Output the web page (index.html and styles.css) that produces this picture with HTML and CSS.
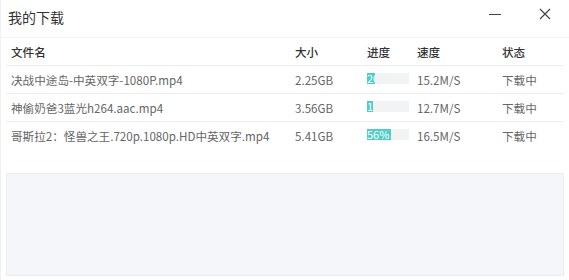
FILE: index.html
```html
<!DOCTYPE html>
<html lang="zh-CN">
<head>
    <meta charset="UTF-8">
    <meta name="viewport" content="width=device-width, initial-scale=1.0">
    <title>我的下载</title>
    <link rel="stylesheet" href="styles.css">
</head>
<body>
    <div class="window">
        <div class="titlebar">
            <span class="title">我的下载</span>
            <div class="win-btns">
                <span class="btn-min"></span>
                <svg class="btn-close" width="12" height="12" viewBox="0 0 12 12">
                    <path d="M1 1 L11 11 M11 1 L1 11" stroke="#444" stroke-width="1.2" fill="none"/>
                </svg>
            </div>
        </div>
        <div class="list">
            <div class="row head">
                <div>文件名</div>
                <div>大小</div>
                <div>进度</div>
                <div>速度</div>
                <div>状态</div>
            </div>
            <div class="row">
                <div class="name">决战中途岛-中英双字-1080P.mp4</div>
                <div>2.25GB</div>
                <div><div class="bar"><div class="fill" style="width: 20%">20%</div></div></div>
                <div>15.2M/S</div>
                <div>下载中</div>
            </div>
            <div class="row">
                <div class="name">神偷奶爸3蓝光h264.aac.mp4</div>
                <div>3.56GB</div>
                <div><div class="bar"><div class="fill" style="width: 15%">15%</div></div></div>
                <div>12.7M/S</div>
                <div>下载中</div>
            </div>
            <div class="row last">
                <div class="name">哥斯拉2：怪兽之王.720p.1080p.HD中英双字.mp4</div>
                <div>5.41GB</div>
                <div><div class="bar"><div class="fill" style="width: 56%">56%</div></div></div>
                <div>16.5M/S</div>
                <div>下载中</div>
            </div>
        </div>
        <div class="footer"></div>
    </div>
</body>
</html>
```

FILE: styles.css
```css
body {
    margin: 0;
    font-family: "Noto Sans CJK SC", "Noto Sans", sans-serif;
    background-color: #fff;
}

.window {
    width: 569px;
    height: 280px;
    display: flex;
    flex-direction: column;
    box-sizing: border-box;
    border-left: 1px solid #f0f0f0;
}

.titlebar {
    height: 37px;
    display: flex;
    align-items: center;
    justify-content: space-between;
    padding-left: 7px;
    border-bottom: 1px solid #f3f3f3;
}

.title {
    font-size: 14px;
    color: #333;
    margin-top: -3px;
}

.win-btns {
    display: flex;
    align-items: center;
    margin-top: -9px;
}

.btn-min {
    width: 12px;
    height: 1px;
    background-color: #444;
    margin-right: 38px;
}

.btn-close {
    margin-right: 18px;
}

.list {
    padding: 0 5px 24px;
}

.row {
    display: grid;
    grid-template-columns: 284px 72px 50px 85px 1fr;
    height: 27px;
    align-items: center;
    border-bottom: 1px solid #eeeeee;
    font-size: 11.6px;
    color: #666;
    padding-left: 5px;
}

.row.head {
    color: #333;
    font-weight: 500;
    height: 26px;
    padding-top: 1px;
}

.row.last {
    border-bottom: none;
}

.name {
    white-space: nowrap;
}

.bar {
    width: 42px;
    height: 11px;
    background-color: #f2f3f5;
    overflow: hidden;
    margin-top: -3px;
}

.fill {
    height: 100%;
    background-color: #4fcdc9;
    color: #fff;
    font-size: 11px;
    line-height: 11px;
    white-space: nowrap;
    overflow: hidden;
}

.footer {
    flex: 1;
    margin: 0 5px 4px;
    background-color: #f5f6fa;
    border: 1px solid #eceef2;
}
```
